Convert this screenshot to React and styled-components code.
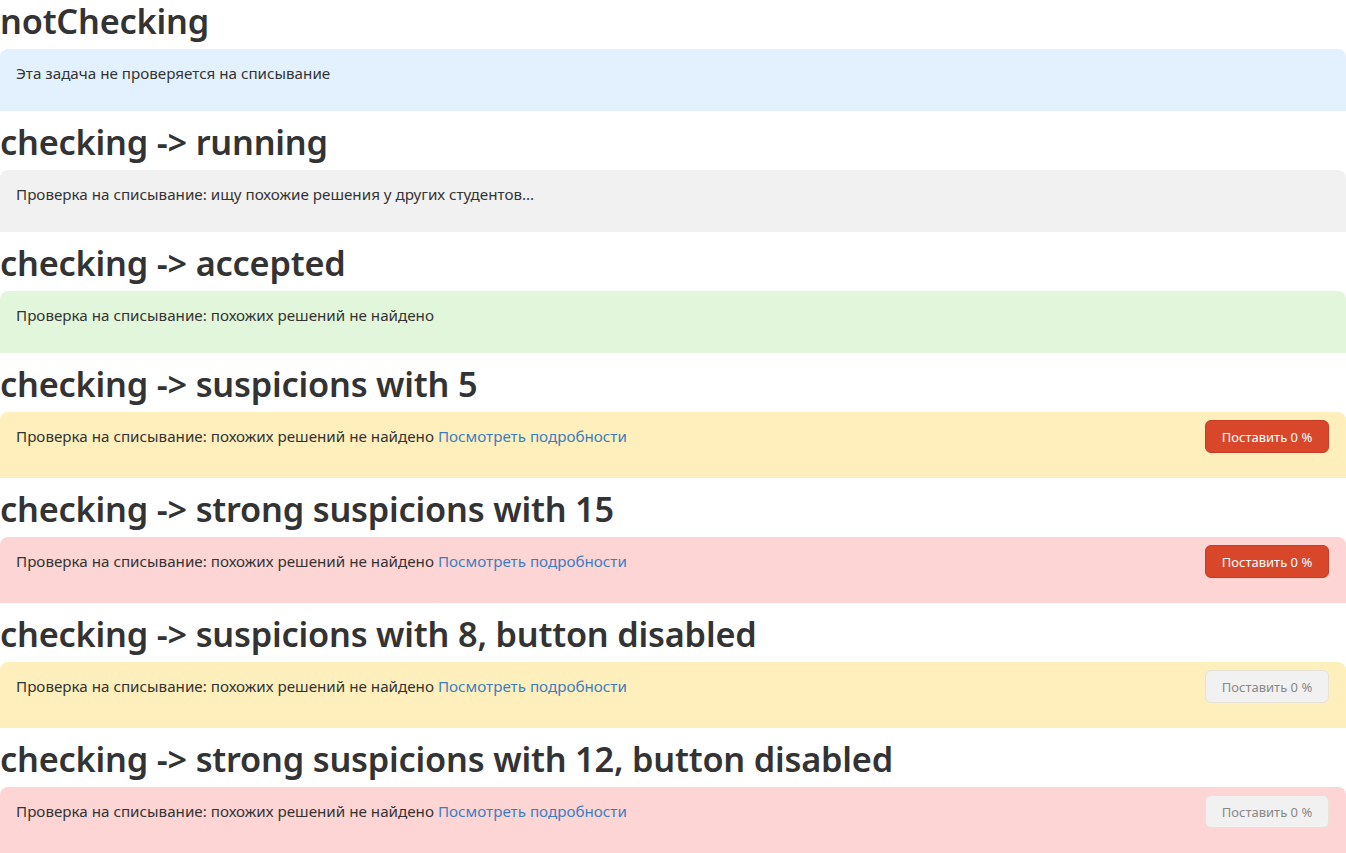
import React from 'react';
import styled, { createGlobalStyle } from 'styled-components';

const GlobalStyle = createGlobalStyle`
  body {
    margin: 0;
    background: #fff;
    color: #333;
    font-family: 'Noto Sans', 'Open Sans', sans-serif;
  }
`;

const COLORS = {
  info: '#e3f1fe',
  neutral: '#f1f1f1',
  success: '#e2f6dc',
  warning: '#feefbd',
  danger: '#fdd5d5',
};

const Section = styled.section`
  display: flex;
  flex-direction: column;
  & + & {
    margin-top: 10px;
  }
`;

const Title = styled.h1`
  margin: 0;
  height: 49px;
  padding-top: 2px;
  box-sizing: border-box;
  font-size: 34.3px;
  line-height: 38px;
  font-weight: 600;
  letter-spacing: -0.2px;
  color: #333;
  white-space: nowrap;
`;

const Alert = styled.div`
  display: flex;
  justify-content: space-between;
  align-items: flex-start;
  background: ${(p) => COLORS[p.$kind]};
  border-radius: 8px 8px 0 0;
  padding: ${(p) => (p.$withAction ? '8px 16px 25px' : '14px 16px 28px')};
  font-size: 15.2px;
  line-height: 20px;
`;

const Message = styled.p`
  margin: 0;
  padding-top: ${(p) => (p.$withAction ? '6px' : '0')};
`;

const Link = styled.a`
  color: #3b7ec0;
  text-decoration: none;
  cursor: pointer;
`;

const Button = styled.button`
  height: 33px;
  width: 124px;
  margin-right: 1px;
  border-radius: 6px;
  font-family: inherit;
  font-size: 13px;
  border: 1px solid ${(p) => (p.disabled ? '#e6e2d6' : '#c93d24')};
  background: ${(p) => (p.disabled ? '#f1f1f1' : '#d9472b')};
  color: ${(p) => (p.disabled ? '#888' : '#fff')};
  cursor: ${(p) => (p.disabled ? 'default' : 'pointer')};
`;

const base = 'Проверка на списывание: похожих решений не найдено';

const items = [
  { title: 'notChecking', kind: 'info', text: 'Эта задача не проверяется на списывание' },
  { title: 'checking -> running', kind: 'neutral', text: 'Проверка на списывание: ищу похожие решения у других студентов...' },
  { title: 'checking -> accepted', kind: 'success', text: base },
  { title: 'checking -> suspicions with 5', kind: 'warning', text: base, action: true },
  { title: 'checking -> strong suspicions with 15', kind: 'danger', text: base, action: true },
  { title: 'checking -> suspicions with 8, button disabled', kind: 'warning', text: base, action: true, disabled: true },
  { title: 'checking -> strong suspicions with 12, button disabled', kind: 'danger', text: base, action: true, disabled: true },
];

const App = () => {
  return (
    <>
      <GlobalStyle />
      {items.map((item) => (
        <Section key={item.title}>
          <Title>{item.title}</Title>
          <Alert $kind={item.kind} $withAction={item.action}>
            <Message $withAction={item.action}>
              {item.text}
              {item.action && (
                <>
                  {' '}
                  <Link>Посмотреть подробности</Link>
                </>
              )}
            </Message>
            {item.action && <Button disabled={item.disabled}>Поставить 0 %</Button>}
          </Alert>
        </Section>
      ))}
    </>
  );
};

export default App;
